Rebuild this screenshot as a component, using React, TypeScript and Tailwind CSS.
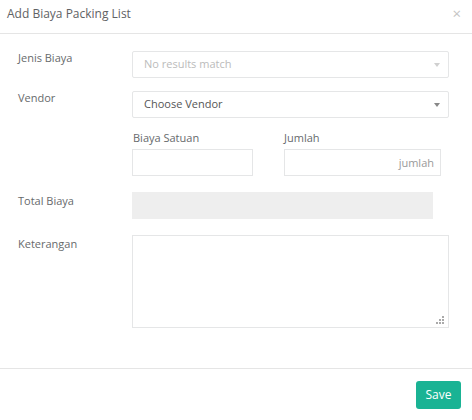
export default function App() {
  const font = { fontFamily: '"Open Sans", "DejaVu Sans", sans-serif' };
  return (
    <div className="w-[472px] h-[420px] bg-white text-[#676a6c]" style={font}>
      {/* Header */}
      <div className="h-[34px] border-b border-[#e5e5e5] flex items-start justify-between pl-[7px] pr-[11px] pt-[5px]">
        <h4 className="text-[12px] leading-[18px] text-[#5f6264]">Add Biaya Packing List</h4>
        <button className="text-[15px] leading-[16px] text-[#c4c4c4]">×</button>
      </div>

      {/* Body */}
      <div className="pl-[18px] pt-[17px] h-[335px] border-b border-[#e5e5e5]">
        <div className="flex">
          <label className="w-[114px] text-[11px] leading-[14px]">Jenis Biaya</label>
          <div className="w-[317px] h-[27px] border border-[#e5e6e7] rounded-[2px] flex items-center justify-between pl-[11px] pr-[8px]">
            <span className="text-[11px] text-[#bbbbbb]">No results match</span>
            <span className="w-0 h-0 border-l-[3px] border-r-[3px] border-t-[4px] border-l-transparent border-r-transparent border-t-[#d0d0d0]" />
          </div>
        </div>

        <div className="flex mt-[13px]">
          <label className="w-[114px] text-[11px] leading-[14px]">Vendor</label>
          <div className="w-[317px] h-[27px] border border-[#e5e6e7] rounded-[2px] flex items-center justify-between pl-[11px] pr-[8px]">
            <span className="text-[11px] text-[#555]">Choose Vendor</span>
            <span className="w-0 h-0 border-l-[3px] border-r-[3px] border-t-[4px] border-l-transparent border-r-transparent border-t-[#888]" />
          </div>
        </div>

        <div className="flex mt-[12px] pl-[114px]">
          <div className="w-[152px]">
            <div className="text-[11px] leading-[16px] pl-[1px]">Biaya Satuan</div>
            <input className="mt-[3px] w-[121px] h-[27px] border border-[#e5e6e7] outline-none" />
          </div>
          <div>
            <div className="text-[11px] leading-[16px]">Jumlah</div>
            <input
              placeholder="jumlah"
              className="mt-[3px] w-[157px] h-[27px] border border-[#e5e6e7] outline-none text-right pr-[6px] text-[11px] placeholder:text-[#999]"
            />
          </div>
        </div>

        <div className="flex mt-[16px]">
          <label className="w-[114px] text-[11px] leading-[14px] pt-[2px]">Total Biaya</label>
          <div className="w-[301px] h-[27px] bg-[#eeeeee]" />
        </div>

        <div className="flex mt-[16px]">
          <label className="w-[114px] text-[11px] leading-[14px] pt-[2px]">Keterangan</label>
          <div className="relative w-[317px] h-[93px] border border-[#e5e6e7]">
            <textarea className="w-full h-full resize-none outline-none" />
            <svg className="absolute right-[4px] bottom-[3px]" width="8" height="8" viewBox="0 0 8 8">
              <rect x="6" y="0" width="2" height="2" fill="#aaa" />
              <rect x="3" y="3" width="2" height="2" fill="#aaa" />
              <rect x="6" y="3" width="2" height="2" fill="#aaa" />
              <rect x="0" y="6" width="2" height="2" fill="#aaa" />
              <rect x="3" y="6" width="2" height="2" fill="#aaa" />
              <rect x="6" y="6" width="2" height="2" fill="#aaa" />
            </svg>
          </div>
        </div>
      </div>

      {/* Footer */}
      <div className="flex justify-end pr-[11px] pt-[12px]">
        <button className="w-[45px] h-[28px] rounded-[3px] bg-[#1ab394] text-white text-[12px]">Save</button>
      </div>
    </div>
  );
}
